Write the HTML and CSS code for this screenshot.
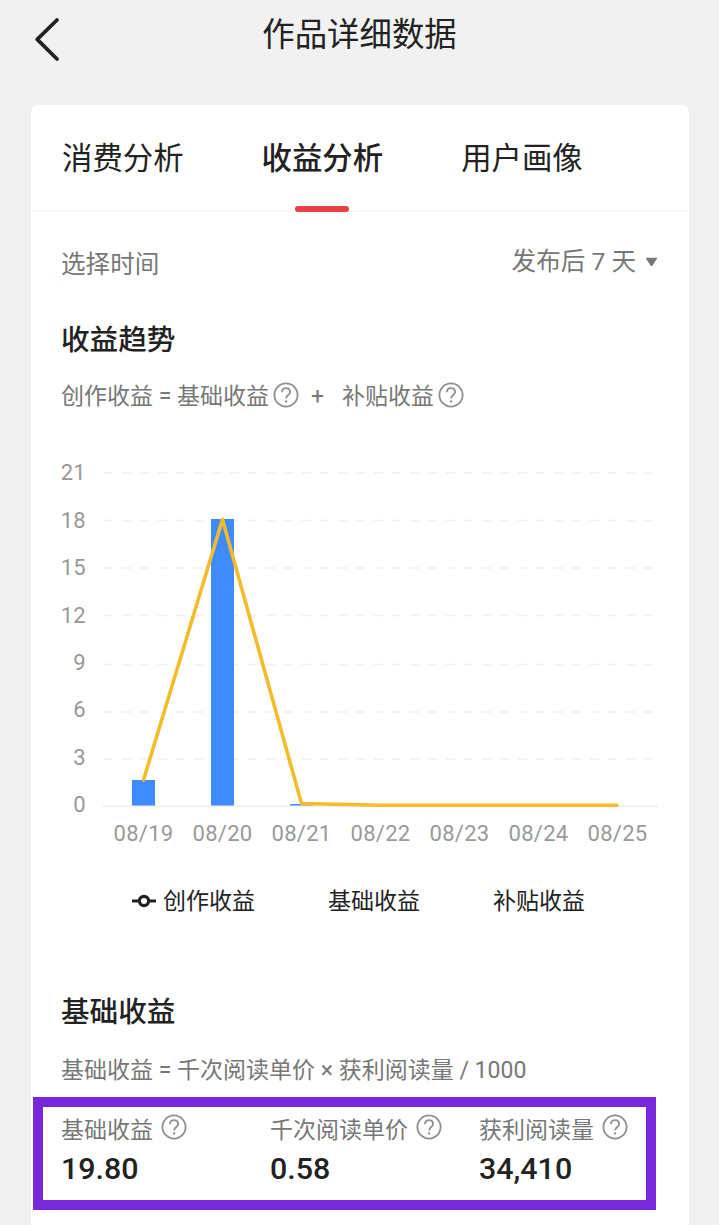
FILE: index.html
```html
<!DOCTYPE html>
<html lang="zh-CN">
<head>
  <meta charset="UTF-8">
  <meta name="viewport" content="width=device-width, initial-scale=1.0">
  <title>作品详细数据</title>
  <link rel="stylesheet" href="styles.css">
</head>
<body>
<svg class="defs" width="0" height="0">
  <symbol id="help" viewBox="0 0 26 26">
    <circle cx="13" cy="13" r="11.6" fill="none" stroke="currentColor" stroke-width="1.8"/>
    <path d="M8.9 10.2c0-2.5 1.7-4.1 4.1-4.1s4.1 1.5 4.1 3.8c0 3.1-4 3.2-4 6.6" fill="none" stroke="currentColor" stroke-width="1.8"/>
    <circle cx="13.1" cy="19.4" r="1.2" fill="currentColor"/>
  </symbol>
</svg>

<header class="header">
  <svg class="back" width="30" height="48" viewBox="0 0 30 48">
    <path d="M25 5 5.2 24.3 25 44" fill="none" stroke="currentColor" stroke-width="3.8" stroke-linecap="round" stroke-linejoin="round"/>
  </svg>
  <h1>作品详细数据</h1>
</header>

<main class="card">
  <nav class="tabs">
    <a class="tab">消费分析</a>
    <a class="tab active">收益分析</a>
    <a class="tab">用户画像</a>
  </nav>

  <div class="range">
    <span>选择时间</span>
    <span class="select">发布后 7 天
      <svg width="13" height="10" viewBox="0 0 13 10"><path d="M1.5.8h10q1.2 0 .5 1L7.4 8.4q-.9 1.2-1.8 0L1 1.8q-.7-1 .5-1z" fill="currentColor"/></svg>
    </span>
  </div>

  <section class="trend">
    <h2>收益趋势</h2>
    <p class="formula">
      <span>创作收益 = 基础收益</span><svg class="help"><use href="#help"/></svg>
      <span class="plus">+</span>
      <span>补贴收益</span><svg class="help"><use href="#help"/></svg>
    </p>

    <svg class="chart" width="598" height="400" viewBox="0 0 598 400">
      <g class="grid">
        <path d="M43 23h548M43 70.5h548M43 118h548M43 165.5h548M43 214.5h548M43 262h548M43 309h548"/>
      </g>
      <path class="axis" d="M42 356.3h555"/>
      <g class="y-labels">
        <text x="25" y="30">21</text>
        <text x="25" y="78">18</text>
        <text x="25" y="125">15</text>
        <text x="25" y="173">12</text>
        <text x="25" y="220">9</text>
        <text x="25" y="267">6</text>
        <text x="25" y="315">3</text>
        <text x="25" y="362">0</text>
      </g>
      <g class="bars">
        <rect x="71" y="330" width="23" height="25.5"/>
        <rect x="150" y="69" width="23" height="286.5"/>
        <rect x="229" y="354" width="23" height="1.5"/>
      </g>
      <polyline class="line" points="82.5,330 161.5,69.5 240.5,353.5 319.5,355.3 556,355.3"/>
      <g class="x-labels">
        <text x="82.5" y="391">08/19</text>
        <text x="161.5" y="391">08/20</text>
        <text x="240.5" y="391">08/21</text>
        <text x="319.5" y="391">08/22</text>
        <text x="398.5" y="391">08/23</text>
        <text x="477.5" y="391">08/24</text>
        <text x="556.5" y="391">08/25</text>
      </g>
    </svg>

    <div class="legend">
      <span class="legend-item">
        <svg width="24" height="16" viewBox="0 0 24 16">
          <path d="M0 7h8M16 7h8" stroke="currentColor" stroke-width="2.8"/>
          <circle cx="12" cy="7" r="4.6" fill="none" stroke="currentColor" stroke-width="3.2"/>
        </svg>
        创作收益
      </span>
      <span class="legend-item">基础收益</span>
      <span class="legend-item">补贴收益</span>
    </div>
  </section>

  <section class="base">
    <h2>基础收益</h2>
    <p class="formula">基础收益 = 千次阅读单价 × 获利阅读量 / 1000</p>
  </section>

  <div class="stats">
    <div class="stat">
      <div class="stat-label">基础收益<svg class="help"><use href="#help"/></svg></div>
      <div class="stat-value">19.80</div>
    </div>
    <div class="stat">
      <div class="stat-label">千次阅读单价<svg class="help"><use href="#help"/></svg></div>
      <div class="stat-value">0.58</div>
    </div>
    <div class="stat">
      <div class="stat-label">获利阅读量<svg class="help"><use href="#help"/></svg></div>
      <div class="stat-value">34,410</div>
    </div>
  </div>
</main>
</body>
</html>
```
FILE: styles.css
```css
* {
  box-sizing: border-box;
}

body {
  margin: 0;
  height: 1225px;
  display: flex;
  flex-direction: column;
  overflow: hidden;
  background-color: #f1f1f1;
  color: #222;
  font-family: Roboto, "Noto Sans CJK SC", sans-serif;
}

h1, h2, p {
  margin: 0;
}

.defs {
  display: none;
}

.header {
  display: grid;
  grid-template-columns: 1fr auto 1fr;
  align-items: start;
  height: 105px;
  padding-top: 15px;
}

.back {
  margin-left: 32px;
}

.header h1 {
  font-size: 32.4px;
  font-weight: 400;
  line-height: 40px;
}

.card {
  flex: 1;
  margin: 0 30px 0 31px;
  background-color: white;
  border-radius: 8px 8px 0 0;
}

.tabs {
  display: flex;
  gap: 78px;
  height: 107px;
  padding: 0 31px;
  border-bottom: 2px solid #f7f7f7;
}

.tab {
  display: flex;
  flex-direction: column;
  align-items: center;
  justify-content: space-between;
  height: 107px;
  padding-top: 34px;
  font-size: 30.4px;
  line-height: 40px;
}

.tab.active {
  font-weight: 500;
}

.tab.active::after {
  content: "";
  width: 54px;
  height: 6px;
  border-radius: 3px;
  background-color: #e64340;
}

.range {
  display: flex;
  justify-content: space-between;
  padding: 37px 31px 0 30px;
  color: #777;
  font-size: 24.6px;
  line-height: 32px;
}

.select {
  display: flex;
  align-items: center;
  gap: 9px;
  height: 26px;
}

.trend,
.base {
  padding: 0 30px;
}

h2 {
  font-size: 28.6px;
  font-weight: 500;
  line-height: 40px;
}

.trend h2 {
  padding-top: 39px;
}

.formula {
  display: flex;
  align-items: center;
  color: #777;
  font-size: 23px;
  line-height: 30px;
}

.trend .formula {
  margin-top: 22px;
}

.help {
  width: 26px;
  height: 26px;
  margin-left: 4px;
  color: #8f8f8f;
}

.formula .help {
  margin-bottom: 4px;
}

.plus {
  margin: 0 18px 0 12px;
}

.chart {
  display: block;
  margin-top: 38px;
}

.grid path {
  stroke: #f0f0f0;
  stroke-width: 1.6;
  stroke-dasharray: 9 9;
}

.axis {
  stroke: #f0f0f0;
  stroke-width: 2;
}

.bars rect {
  fill: #3f8afc;
}

.line {
  fill: none;
  stroke: #f2bc2b;
  stroke-width: 3.6;
  stroke-linecap: round;
  stroke-linejoin: round;
}

.chart text {
  fill: #999;
  font-size: 22px;
  letter-spacing: 0.3px;
}

.y-labels {
  text-anchor: end;
}

.x-labels {
  text-anchor: middle;
}

.legend {
  display: flex;
  gap: 73px;
  margin-top: 37px;
  padding-left: 71px;
  font-size: 23px;
  line-height: 30px;
}

.legend-item {
  display: flex;
  align-items: center;
  gap: 7px;
}

.base h2 {
  margin-top: 75px;
}

.base .formula {
  margin-top: 24px;
}

.stats {
  display: flex;
  height: 113px;
  margin: 11px 33px 0 2px;
  padding: 7px 0 0 18px;
  border: 10px solid #7927db;
}

.stat {
  flex: 0 0 209px;
}

.stat-label {
  display: flex;
  color: #777;
  font-size: 23px;
  line-height: 34px;
}

.stat-label .help {
  margin-left: 8px;
}

.stat-value {
  font-size: 30.4px;
  font-weight: 500;
  line-height: 42px;
}
```
